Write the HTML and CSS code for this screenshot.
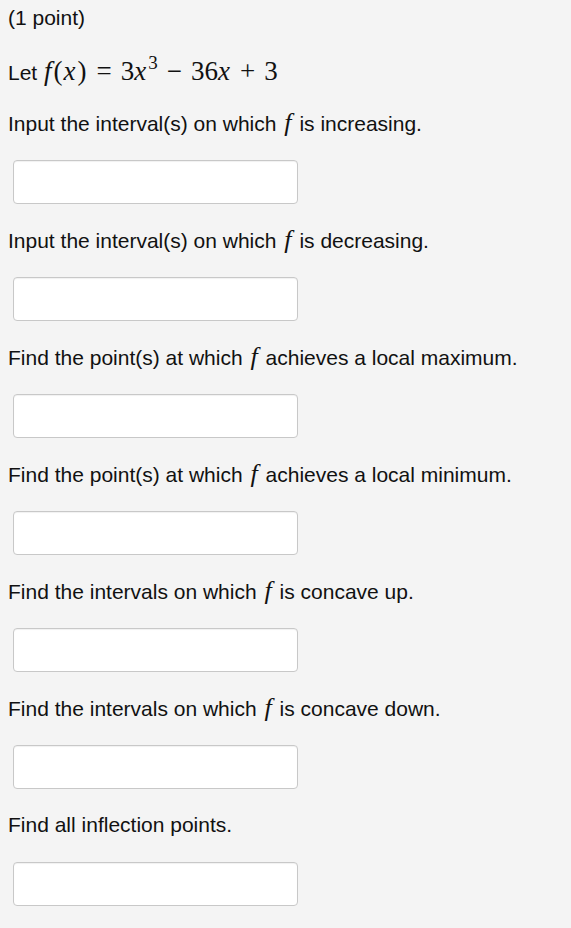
FILE: index.html
```html
<!DOCTYPE html>
<html>
<head>
<meta charset="utf-8">
<link rel="stylesheet" href="styles.css">
</head>
<body>
<div class="problem">
  <p class="line points">(1 point)</p>
  <p class="line let">Let <span class="math"><i>f</i><span class="p">(</span><i>x</i><span class="p">)</span><span class="op">=</span>3<i>x</i><sup>3</sup><span class="op">−</span>36<i>x</i><span class="op">+</span>3</span></p>
  <p class="line q">Input the interval(s) on which <i class="mf">f</i> is increasing.</p>
  <div class="box"></div>
  <p class="line q">Input the interval(s) on which <i class="mf">f</i> is decreasing.</p>
  <div class="box"></div>
  <p class="line q">Find the point(s) at which <i class="mf">f</i> achieves a local maximum.</p>
  <div class="box"></div>
  <p class="line q">Find the point(s) at which <i class="mf">f</i> achieves a local minimum.</p>
  <div class="box"></div>
  <p class="line q">Find the intervals on which <i class="mf">f</i> is concave up.</p>
  <div class="box"></div>
  <p class="line q">Find the intervals on which <i class="mf">f</i> is concave down.</p>
  <div class="box"></div>
  <p class="line q">Find all inflection points.</p>
  <div class="box"></div>
</div>
</body>
</html>
```
FILE: styles.css
```css
html, body {
  margin: 0;
  padding: 0;
  background: #f4f4f4;
}
.problem {
  padding: 6px 8px 0 8px;
  font-family: "Liberation Sans", Arial, sans-serif;
  font-size: 21px;
  color: #111;
}
.line {
  margin: 0;
  height: 24px;
  line-height: 24px;
  white-space: nowrap;
}
.let {
  margin-top: 29px;
}
.q {
  margin-top: 28px;
}
.box + .q {
  margin-top: 24px;
}
.math {
  font-family: "Liberation Serif", "Times New Roman", serif;
  font-size: 27px;
  margin-left: 1px;
}
.math i, .mf {
  font-family: "Liberation Serif", "Times New Roman", serif;
  font-style: italic;
  font-size: 26px;
}
.math i {
  font-size: 27px;
  padding-right: 1px;
}
.mf {
  margin: 0 2px;
}
.p {
  padding: 0 1px;
}
.math sup {
  font-size: 19px;
  line-height: 0;
  vertical-align: 11px;
  margin-left: 1px;
}
.op {
  padding: 0 9px;
}
.box {
  margin: 25px 0 0 5px;
  width: 283px;
  height: 42px;
  background: #fff;
  border: 1px solid #c8c8c8;
  border-radius: 4px;
  box-shadow: inset 0 1px 1px rgba(0,0,0,0.06);
}
```
